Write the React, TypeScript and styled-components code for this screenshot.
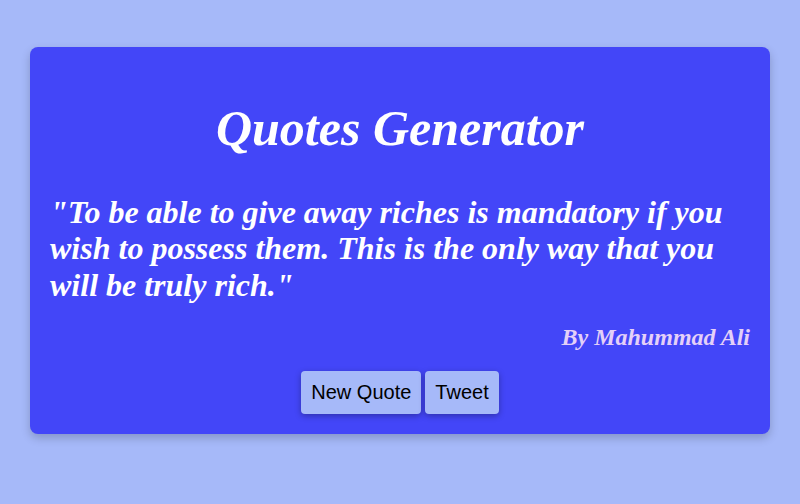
import styled, { createGlobalStyle } from 'styled-components'

const quote = {
    text: '"To be able to give away riches is mandatory if you wish to possess them. This is the only way that you will be truly rich."',
    author: 'Mahummad Ali'
}

const App = () => {
    return (
        <>
            <GlobalStyle />
            <Page>
                <Card>
                    <Title>Quotes Generator</Title>
                    <QuoteText>{quote.text}</QuoteText>
                    <Author>By {quote.author}</Author>
                    <Buttons>
                        <Button type="button">New Quote</Button>
                        <Button type="button">Tweet</Button>
                    </Buttons>
                </Card>
            </Page>
        </>
    )
}

export default App

const GlobalStyle = createGlobalStyle`
    html, body {
        margin: 0;
        padding: 0;
        background: #a6b9f9;
    }
`

const Page = styled.div`
    min-height: 504px;
    padding: 47px 30px 0;
    box-sizing: border-box;
    font-family: "Liberation Serif", "Times New Roman", serif;
`

const Card = styled.div`
    background: #4346f8;
    border-radius: 8px;
    box-shadow: 0px 4px 10px rgba(0, 0, 0, 0.2);
    padding: 53px 20px 20px;
    color: #fff;
`

const Title = styled.h1`
    margin: 0;
    text-align: center;
    font-size: 50px;
    font-style: italic;
    font-weight: bold;
    line-height: 1.15;
`

const QuoteText = styled.p`
    margin: 36px 0 0;
    font-size: 32px;
    font-style: italic;
    font-weight: bold;
    line-height: 1.15;
`

const Author = styled.p`
    margin: 20px 0 0;
    text-align: right;
    font-size: 24px;
    font-style: italic;
    font-weight: bold;
    color: #e4d0f8;
`

const Buttons = styled.div`
    margin-top: 20px;
    display: flex;
    justify-content: center;
    gap: 4px;
`

const Button = styled.button`
    cursor: pointer;
    height: 43px;
    padding: 0 10px;
    font-family: "Liberation Sans", Arial, sans-serif;
    font-size: 20px;
    color: #000;
    background: #a6b9f9;
    border: none;
    border-radius: 4px;
    box-shadow: 0px 2px 6px rgba(0, 0, 0, 0.3);
`
